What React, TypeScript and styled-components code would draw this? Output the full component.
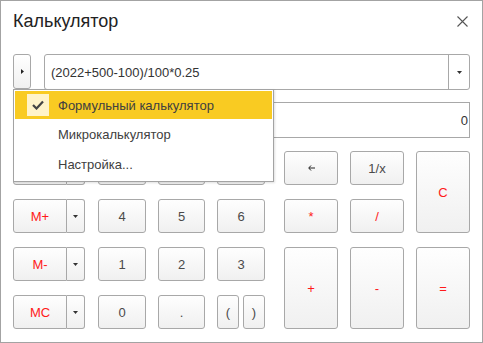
import React from "react";
import styled, { createGlobalStyle } from "styled-components";

const Global = createGlobalStyle`
  html, body { margin: 0; padding: 0; background: #fff; }
  body { font-family: "Liberation Sans", Arial, sans-serif; }
  * { box-sizing: border-box; }
`;

const Window = styled.div`
  position: relative;
  width: 483px;
  height: 343px;
  border: 1px solid #a3a3a3;
  background: #fff;
  display: flex;
  flex-direction: column;
`;

const Header = styled.div`
  display: flex;
  align-items: center;
  justify-content: space-between;
  height: 41px;
  padding: 0 14px 0 12px;
`;

const Title = styled.div`
  font-size: 18px;
  color: #222;
  line-height: 20px;
  margin-top: -1px;
`;

const Close = styled.div`
  width: 11px;
  height: 11px;
  display: flex;
  margin-top: -1px;
`;

const Body = styled.div`
  position: relative;
  padding: 12px 12px 0 12px;
  display: flex;
  flex-direction: column;
`;

const FormulaRow = styled.div`
  display: flex;
  gap: 13px;
  height: 36px;
`;

const SmallButton = styled.div`
  width: 18px;
  height: 35px;
  border: 1px solid #a8a8a8;
  border-radius: 3px;
  background: linear-gradient(#fff, #f0f0f0);
  display: flex;
  align-items: center;
  justify-content: center;
`;

const Input = styled.div`
  flex: 1;
  display: flex;
  border: 1px solid #a8a8a8;
  border-radius: 3px;
  background: #fff;
`;

const InputText = styled.div`
  flex: 1;
  display: flex;
  align-items: center;
  padding-left: 6px;
  font-size: 13px;
  color: #333;
`;

const InputDrop = styled.div`
  width: 21px;
  border-left: 1px solid #a8a8a8;
  display: flex;
  align-items: center;
  justify-content: center;
`;

const Display = styled.div`
  margin-top: 12px;
  height: 36px;
  border: 1px solid #a8a8a8;
  display: flex;
  align-items: center;
  justify-content: flex-end;
  padding-right: 1px;
  font-size: 13px;
  color: #333;
`;

const Keys = styled.div`
  margin-top: 13px;
  display: flex;
`;

const Column = styled.div<{ $gapAfter: number }>`
  display: grid;
  row-gap: 14px;
  grid-auto-rows: 34px;
  margin-right: ${(p) => p.$gapAfter}px;
`;

const Split = styled.div`
  display: flex;
`;

const Key = styled.div<{ $red?: boolean; $w?: number; $rowSpan?: number }>`
  ${(p) => (p.$w ? `width: ${p.$w}px;` : "")}
  ${(p) => (p.$rowSpan ? `grid-row: span ${p.$rowSpan};` : "")}
  border: 1px solid #a8a8a8;
  border-radius: 3px;
  background: linear-gradient(#fefefe, #f0f0f0);
  display: flex;
  align-items: center;
  justify-content: center;
  font-size: 13px;
  color: ${(p) => (p.$red ? "#ff1a1a" : "#4a4a4a")};
`;

const MemKey = styled(Key)`
  width: 54px;
  border-radius: 3px 0 0 3px;
`;

const MemDrop = styled(Key)`
  width: 18px;
  border-left: none;
  border-radius: 0 3px 3px 0;
`;

const DigitsGrid = styled.div`
  display: grid;
  grid-template-columns: 48px 47px 48px;
  grid-auto-rows: 34px;
  column-gap: 12px;
  row-gap: 14px;
  margin-right: 19px;
`;

const Parens = styled.div`
  display: flex;
  gap: 4px;
`;

const OpsGrid = styled.div`
  display: grid;
  grid-template-columns: 54px 54px 54px;
  grid-template-rows: 34px 34px 34px 34px;
  column-gap: 12px;
  row-gap: 14px;
`;

const Menu = styled.div`
  position: absolute;
  left: 12px;
  top: 47px;
  width: 261px;
  height: 93px;
  border: 1px solid #a3a3a3;
  background: #fff;
  padding: 1px;
  display: flex;
  flex-direction: column;
  box-shadow: 1px 1px 2px rgba(0, 0, 0, 0.12);
`;

const MenuItem = styled.div<{ $active?: boolean }>`
  height: ${(p) => (p.$active ? 28 : 30)}px;
  display: flex;
  align-items: center;
  background: ${(p) => (p.$active ? "#f9cb22" : "transparent")};
  font-size: 13px;
  color: #404040;
  padding-left: 12px;
  gap: 9px;
`;

const CheckBox = styled.div<{ $on?: boolean }>`
  width: 22px;
  height: 22px;
  display: flex;
  align-items: center;
  justify-content: center;
  background: ${(p) => (p.$on ? "#fff3c9" : "transparent")};
`;

const Tri = ({ dir }: { dir: "right" | "down" }) =>
  dir === "right" ? (
    <svg width="3" height="5" viewBox="0 0 3 5">
      <path d="M0 0 L3 2.5 L0 5 Z" fill="#222" />
    </svg>
  ) : (
    <svg width="5" height="3" viewBox="0 0 5 3">
      <path d="M0 0 L5 0 L2.5 3 Z" fill="#333" />
    </svg>
  );

const Arrow = () => (
  <svg width="7" height="6" viewBox="0 0 7 6">
    <path d="M7 3 H1 M3 0.5 L0.7 3 L3 5.5" stroke="#222" strokeWidth="1" fill="none" />
  </svg>
);

const mem = ["", "M+", "M-", "MC"];

export default function App() {
  return (
    <>
      <Global />
      <Window>
        <Header>
          <Title>Калькулятор</Title>
          <Close>
            <svg width="11" height="11" viewBox="0 0 11 11">
              <path d="M0.5 0.5 L10.5 10.5 M10.5 0.5 L0.5 10.5" stroke="#555" strokeWidth="1.1" />
            </svg>
          </Close>
        </Header>
        <Body>
          <FormulaRow>
            <SmallButton>
              <Tri dir="right" />
            </SmallButton>
            <Input>
              <InputText>(2022+500-100)/100*0.25</InputText>
              <InputDrop>
                <Tri dir="down" />
              </InputDrop>
            </Input>
          </FormulaRow>
          <Display>0</Display>
          <Keys>
            <Column $gapAfter={13}>
              {mem.map((m, i) => (
                <Split key={i}>
                  <MemKey $red>{m}</MemKey>
                  <MemDrop>
                    <Tri dir="down" />
                  </MemDrop>
                </Split>
              ))}
            </Column>
            <DigitsGrid>
              {["", "", "", "4", "5", "6", "1", "2", "3", "0", "."].map((d, i) => (
                <Key key={i}>{d}</Key>
              ))}
              <Parens>
                <Key $w={22}>(</Key>
                <Key $w={22}>)</Key>
              </Parens>
            </DigitsGrid>
            <OpsGrid>
              <Key>
                <Arrow />
              </Key>
              <Key>1/x</Key>
              <Key $red $rowSpan={2}>C</Key>
              <Key $red>*</Key>
              <Key $red>/</Key>
              <Key $red $rowSpan={2}>+</Key>
              <Key $red $rowSpan={2}>-</Key>
              <Key $red $rowSpan={2}>=</Key>
            </OpsGrid>
          </Keys>
          <Menu>
            <MenuItem $active>
              <CheckBox $on>
                <svg width="12" height="10" viewBox="0 0 12 10">
                  <path d="M1 5 L4.5 8.5 L11 1.5" stroke="#444" strokeWidth="2.2" fill="none" />
                </svg>
              </CheckBox>
              Формульный калькулятор
            </MenuItem>
            <MenuItem>
              <CheckBox />
              Микрокалькулятор
            </MenuItem>
            <MenuItem>
              <CheckBox />
              Настройка...
            </MenuItem>
          </Menu>
        </Body>
      </Window>
    </>
  );
}
